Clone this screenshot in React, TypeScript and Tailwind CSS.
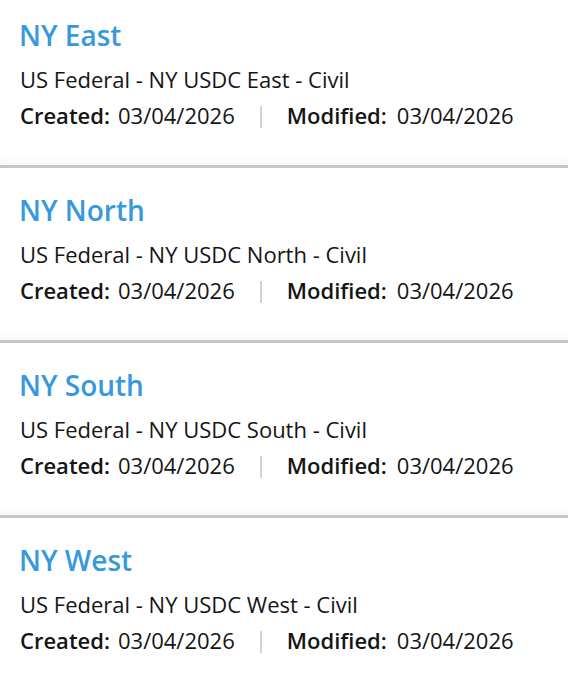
import React from 'react';

interface Court {
    name: string;
    path: string;
    created: string;
    modified: string;
}

const courts: Court[] = [
    { name: 'NY East', path: 'US Federal - NY USDC East - Civil', created: '03/04/2026', modified: '03/04/2026' },
    { name: 'NY North', path: 'US Federal - NY USDC North - Civil', created: '03/04/2026', modified: '03/04/2026' },
    { name: 'NY South', path: 'US Federal - NY USDC South - Civil', created: '03/04/2026', modified: '03/04/2026' },
    { name: 'NY West', path: 'US Federal - NY USDC West - Civil', created: '03/04/2026', modified: '03/04/2026' },
];

const CourtCard: React.FC<{ court: Court; first: boolean }> = ({ court, first }) => (
    <div
        className={`${first ? 'h-[168px] pt-[17px]' : 'h-[175px] pt-[24px]'} px-5 bg-white border-b-[3px] border-[#c6c6c6] shadow-[inset_0_-10px_10px_-8px_rgba(0,0,0,0.05)]`}
    >
        <h2 className="-ml-[1px] text-[28px] leading-[36px] font-semibold text-[#3799dc]">{court.name}</h2>
        <p className="mt-[11px] text-[22px] leading-[30px] text-[#151515]">{court.path}</p>
        <div className="mt-[6px] flex items-center text-[22px] leading-[30px] text-[#151515]">
            <span className="font-semibold">Created:</span>
            <span className="ml-[8px]">{court.created}</span>
            <span className="mx-[25px] mt-[4px] h-[22px] w-[2px] bg-[#d2d2d2]" />
            <span className="font-semibold">Modified:</span>
            <span className="ml-[10px]">{court.modified}</span>
        </div>
    </div>
);

export default function App() {
    return (
        <div className="w-[568px] h-[680px] bg-white overflow-hidden" style={{ fontFamily: '"Open Sans", "Noto Sans", sans-serif' }}>
            {courts.map((c, i) => (
                <CourtCard key={c.name} court={c} first={i === 0} />
            ))}
        </div>
    );
}
